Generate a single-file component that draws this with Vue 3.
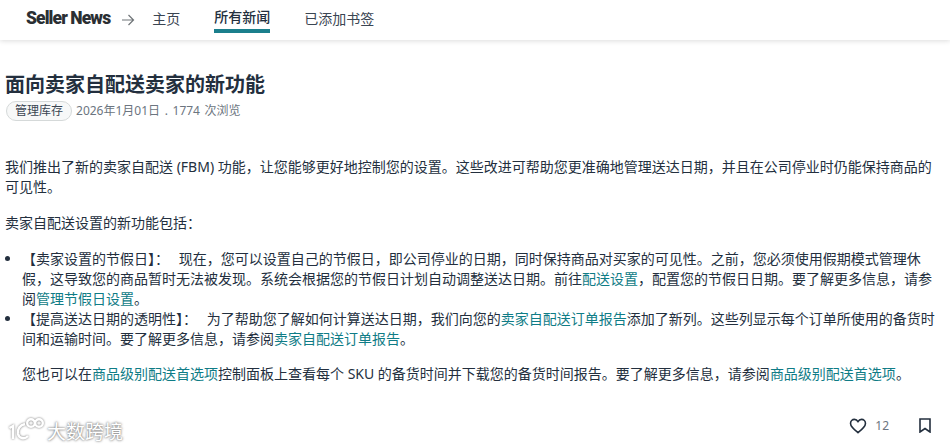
<script setup>
const tabs = [
  { label: '主页', active: false },
  { label: '所有新闻', active: true },
  { label: '已添加书签', active: false },
]
</script>

<template>
  <div class="page">
    <header class="topbar">
      <span class="brand">Seller News</span>
      <svg class="arrow" width="14" height="12" viewBox="0 0 14 12" fill="none" stroke="#6f7478" stroke-width="1.2">
        <path d="M1 6h11.500M7.500 1l5 5-5 5" />
      </svg>
      <nav class="tabs">
        <a v-for="tab in tabs" :key="tab.label" class="tab" :class="{ active: tab.active }">{{ tab.label }}</a>
      </nav>
    </header>

    <main class="article">
      <h1>面向卖家自配送卖家的新功能</h1>
      <div class="meta">
        <span class="chip">管理库存</span>
        <span class="date">2026年1月01日 . 1774 次浏览</span>
      </div>

      <p class="first">我们推出了新的卖家自配送 (FBM) 功能，让您能够更好地控制您的设置。这些改进可帮助您更准确地管理送达日期，并且在公司停业时仍能保持商品的可见性。</p>
      <p>卖家自配送设置的新功能包括：</p>
      <ul>
        <li><span class="lead">【卖家设置的节假日】：</span> 现在，您可以设置自己的节假日，即公司停业的日期，同时保持商品对买家的可见性。之前，您必须使用假期模式管理休假，这导致您的商品暂时无法被发现。系统会根据您的节假日计划自动调整送达日期。前往<a>配送设置</a>，配置您的节假日日期。要了解更多信息，请参阅<a>管理节假日设置</a>。</li>
        <li><span class="lead">【提高送达日期的透明性】：</span> 为了帮助您了解如何计算送达日期，我们向您的<a>卖家自配送订单报告</a>添加了新列。这些列显示每个订单所使用的备货时间和运输时间。要了解更多信息，请参阅<a>卖家自配送订单报告</a>。</li>
      </ul>
      <p class="indent">您也可以在<a>商品级别配送首选项</a>控制面板上查看每个 SKU 的备货时间并下载您的备货时间报告。要了解更多信息，请参阅<a>商品级别配送首选项</a>。</p>
    </main>

    <div class="actions">
      <svg width="18" height="16" viewBox="0 0 20 18" fill="none" stroke="#232f3e" stroke-width="1.800">
        <path d="M10 16.500C5 12.600 1.600 9.800 1.600 6.200 1.600 3.500 3.600 1.600 6 1.600c1.600 0 3.100.9 4 2.400.9-1.500 2.400-2.400 4-2.400 2.400 0 4.400 1.900 4.400 4.600 0 3.600-3.400 6.400-8.400 10.300z" />
      </svg>
      <span class="count">12</span>
      <svg class="mark" width="12" height="15" viewBox="0 0 12 15" fill="none" stroke="#232f3e" stroke-width="1.6">
        <path d="M1 1h10v13l-5-3.500L1 14z" />
      </svg>
    </div>

    <div class="watermark">
      <svg width="36" height="24" viewBox="0 0 36 24" fill="none" stroke="#fff" stroke-width="2.400">
        <path d="M1.500 11l3.500-2v13M17 7c-5 1-8 5-7 10 1 4 6 6 10 2" />
        <circle cx="23" cy="6" r="3.800" />
        <circle cx="31" cy="6" r="3.800" />
      </svg>
      <span>大数跨境</span>
    </div>
  </div>
</template>

<style scoped>
.page {
  position: relative;
  width: 950px;
  height: 446px;
  overflow: hidden;
  background: #fff;
  color: #232f3e;
  font-family: "Noto Sans", "Noto Sans CJK SC", sans-serif;
  font-size: 14px;
}
.topbar {
  display: flex;
  align-items: center;
  height: 40px;
  padding-left: 26px;
  box-shadow: 0 1px 5px rgba(0, 0, 0, 0.14);
}
.brand {
  font-family: "Roboto", sans-serif;
  font-weight: 900;
  font-size: 17.500px;
  letter-spacing: -0.9px;
  color: #2b2f33;
  margin-top: -5px;
}
.arrow {
  margin-left: 11px;
  margin-top: -1px;
}
.tabs {
  display: flex;
  gap: 34px;
  margin-left: 17px;
  height: 100%;
}
.tab {
  display: flex;
  align-items: center;
  height: 33px;
  padding-top: 5px;
  box-sizing: border-box;
  line-height: 20px;
  color: #3a4552;
}
.tab.active {
  border-bottom: 4px solid #1b7f8c;
  color: #232f3e;
  font-weight: 500;
}
.article {
  padding: 31px 5px 0;
}
h1 {
  margin: 0;
  font-size: 20px;
  line-height: 28px;
  font-weight: 700;
}
.meta {
  display: flex;
  align-items: center;
  gap: 4px;
  margin-top: 2px;
  padding-left: 1px;
  font-size: 12px;
  line-height: 18px;
  color: #6c7580;
}
.date {
  word-spacing: 1.500px;
}
.chip {
  padding: 0 8px;
  border: 1px solid #d5d9d9;
  border-radius: 10px;
  background: #f7f8f8;
  color: #3a4552;
}
p {
  margin: 0 0 16px;
  line-height: 20px;
}
.first {
  margin-top: 36px;
}
ul {
  margin: 0 0 15px;
  padding-left: 17px;
}
li {
  line-height: 20px;
}
.lead {
  margin-right: 6px;
}
.indent {
  padding-left: 17px;
}
a {
  color: #0f7c86;
}
.actions {
  position: absolute;
  right: 19px;
  top: 417px;
  display: flex;
  align-items: center;
}
.count {
  margin-left: 8px;
  font-size: 12px;
  color: #6c7580;
}
.mark {
  margin-left: 30px;
}
.watermark {
  position: absolute;
  left: 8px;
  top: 413px;
  display: flex;
  align-items: center;
  gap: 3px;
  color: #fff;
  font-size: 19px;
  text-shadow: 0 0 2px #777, 0 0 3px #999;
}
.watermark span {
  margin-top: 4px;
}
.watermark svg {
  filter: drop-shadow(0 0 1px #777);
}
</style>
